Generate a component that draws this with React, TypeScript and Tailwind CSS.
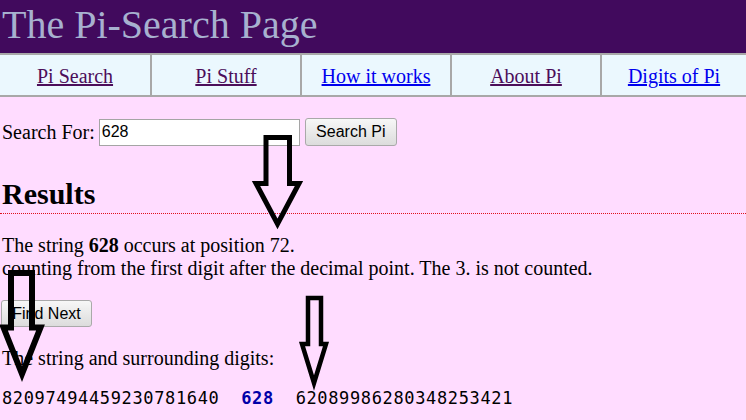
import React from "react";

const serif = { fontFamily: '"Liberation Serif", "Times New Roman", serif' };

function NavCell({ label, visited, first, last }: { label: string; visited: boolean; first?: boolean; last?: boolean }) {
  return (
    <div
      className={`flex h-[40px] items-center justify-center bg-[#ebf8fe] pt-[2px] ${first ? "" : "border-l-2 border-[#a8a8a8]"} ${last ? "flex-1" : "w-[150px] shrink-0"}`}
    >
      <a
        href="#"
        className={`text-[20px] leading-[23px] underline ${visited ? "text-[#4c0e5a]" : "text-[#0000ee]"}`}
      >
        {label}
      </a>
    </div>
  );
}

function GrayButton({ children, className = "" }: { children: React.ReactNode; className?: string }) {
  return (
    <button
      className={`rounded-[3px] border border-[#a9a9a9] bg-gradient-to-b from-[#f7f7f7] to-[#dcdcdc] px-[10px] text-[16px] leading-none text-black ${className}`}
      style={{ fontFamily: '"Liberation Sans", Arial, sans-serif' }}
    >
      {children}
    </button>
  );
}

export default function App() {
  return (
    <div className="relative h-[420px] w-[746px] overflow-hidden bg-[#ffdcff] text-black" style={serif}>
      <div className="h-[53px] bg-[#410a5d] pl-[2px] pt-[5px] text-[40px] leading-[40px] text-[#a7b1cf]">
        The Pi-Search Page
      </div>
      <nav className="flex border-y-2 border-[#a8a8a8]">
        <NavCell label="Pi Search" visited first />
        <NavCell label="Pi Stuff" visited />
        <NavCell label="How it works" visited={false} />
        <NavCell label="About Pi" visited />
        <NavCell label="Digits of Pi" visited={false} last />
      </nav>

      <div className="px-[2px]">
        <div className="mt-[21px] flex h-[28px] items-center">
          <span className="text-[20px] leading-[23px]">Search For:</span>
          <input
            defaultValue="628"
            className="ml-[4px] h-[27px] w-[201px] border border-[#a5a5a5] bg-white px-[2px] text-[16px] text-black outline-none"
            style={{ fontFamily: '"Liberation Sans", Arial, sans-serif' }}
          />
          <GrayButton className="ml-[5px] h-[28px] w-[92px]">Search Pi</GrayButton>
        </div>

        <h2 className="mt-[31px] -mx-[2px] border-b border-dotted border-[#e0101a] px-[2px] pb-[2px] text-[30px] font-bold leading-[34px]">
          Results
        </h2>

        <p className="mt-[20px] text-[20px] leading-[23px]">
          The string <b>628</b> occurs at position 72.
          <br />
          counting from the first digit after the decimal point. The 3. is not counted.
        </p>

        <GrayButton className="mt-[20px] -ml-[1px] h-[27px] w-[91px]">Find Next</GrayButton>

        <p className="mt-[20px] text-[20px] leading-[23px]">The string and surrounding digits:</p>

        <div
          className="mt-[18px] whitespace-pre text-[17px] leading-[20px] tracking-[0.64px]"
          style={{ fontFamily: '"DejaVu Sans Mono", Consolas, monospace' }}
        >
          82097494459230781640{"  "}
          <b className="text-[#0000a8]">628</b>
          {"  "}62089986280348253421
        </div>
      </div>

      <svg className="pointer-events-none absolute left-0 top-0" width="746" height="420" viewBox="0 0 746 420">
        <path
          d="M266 137.5 H289.5 V183.5 H299 L277.5 224 L256 183.5 H266 Z"
          fill="none"
          stroke="#000"
          strokeWidth="5"
        />
        <path
          d="M11 273 H32 V327.5 H40.5 L22 374 L3.5 327.5 H11 Z"
          fill="none"
          stroke="#000"
          strokeWidth="6"
        />
        <path
          d="M308 298 H321 V344 H326 L314 383 L302 344 H308 Z"
          fill="none"
          stroke="#000"
          strokeWidth="4.5"
        />
      </svg>
    </div>
  );
}
